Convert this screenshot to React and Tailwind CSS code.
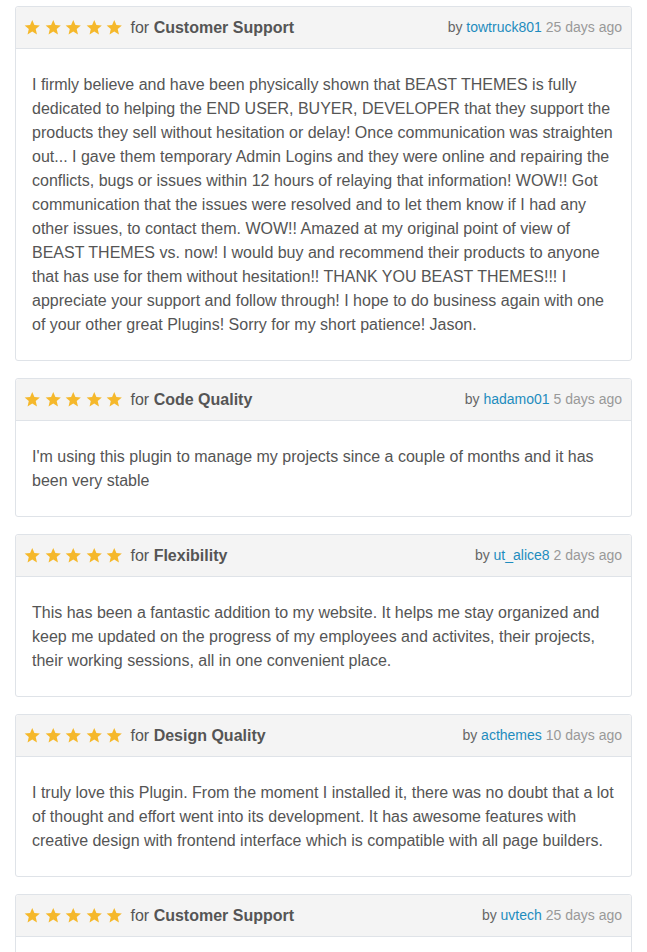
const reviews = [
  {
    topic: "Customer Support",
    user: "towtruck801",
    when: "25 days ago",
    text: "I firmly believe and have been physically shown that BEAST THEMES is fully dedicated to helping the END USER, BUYER, DEVELOPER that they support the products they sell without hesitation or delay! Once communication was straighten out... I gave them temporary Admin Logins and they were online and repairing the conflicts, bugs or issues within 12 hours of relaying that information! WOW!! Got communication that the issues were resolved and to let them know if I had any other issues, to contact them. WOW!! Amazed at my original point of view of BEAST THEMES vs. now! I would buy and recommend their products to anyone that has use for them without hesitation!! THANK YOU BEAST THEMES!!! I appreciate your support and follow through! I hope to do business again with one of your other great Plugins! Sorry for my short patience! Jason.",
  },
  {
    topic: "Code Quality",
    user: "hadamo01",
    when: "5 days ago",
    text: "I'm using this plugin to manage my projects since a couple of months and it has been very stable",
  },
  {
    topic: "Flexibility",
    user: "ut_alice8",
    when: "2 days ago",
    text: "This has been a fantastic addition to my website. It helps me stay organized and keep me updated on the progress of my employees and activites, their projects, their working sessions, all in one convenient place.",
  },
  {
    topic: "Design Quality",
    user: "acthemes",
    when: "10 days ago",
    text: "I truly love this Plugin. From the moment I installed it, there was no doubt that a lot of thought and effort went into its development. It has awesome features with creative design with frontend interface which is compatible with all page builders.",
  },
  {
    topic: "Customer Support",
    user: "uvtech",
    when: "25 days ago",
    text: "Great support, quick answers and a very helpful team.",
  },
]

function Star() {
  return (
    <svg viewBox="0 0 20 20" className="w-[16.5px] h-[16.5px]">
      <path fill="#f5b82b" d="M10 1.2l2.6 6.1 6.6.5-5 4.4 1.5 6.5L10 15.3l-5.7 3.4 1.5-6.5-5-4.4 6.6-.5z" />
    </svg>
  )
}

function Review({ review }) {
  return (
    <div className="border border-[#dfe3e8] rounded-[3px] mb-[17px] bg-white">
      <div className="flex items-center justify-between h-[42px] pl-2 pr-[9px] bg-[#f4f4f4] border-b border-[#dfe3e8] rounded-t-[3px]">
        <div className="flex items-center">
          <div className="flex gap-1">
            <Star /><Star /><Star /><Star /><Star />
          </div>
          <span className="ml-[8px] text-[16px] text-[#555]">
            for <strong className="font-bold">{review.topic}</strong>
          </span>
        </div>
        <div className="text-[14px] text-[#666]">
          by <a className="text-[#1e8cbe]">{review.user}</a>{" "}
          <span className="text-[#999]">{review.when}</span>
        </div>
      </div>
      <div className="px-4 pt-[24px] pb-[23px]">
        <p className="text-[16px] leading-6 text-[#555]">{review.text}</p>
      </div>
    </div>
  )
}

export default function App() {
  return (
    <div className="bg-white h-[952px] overflow-hidden px-[15px] pt-[6px] font-['Liberation_Sans',Arial,sans-serif]">
      {reviews.map((r, i) => <Review key={i} review={r} />)}
    </div>
  )
}
